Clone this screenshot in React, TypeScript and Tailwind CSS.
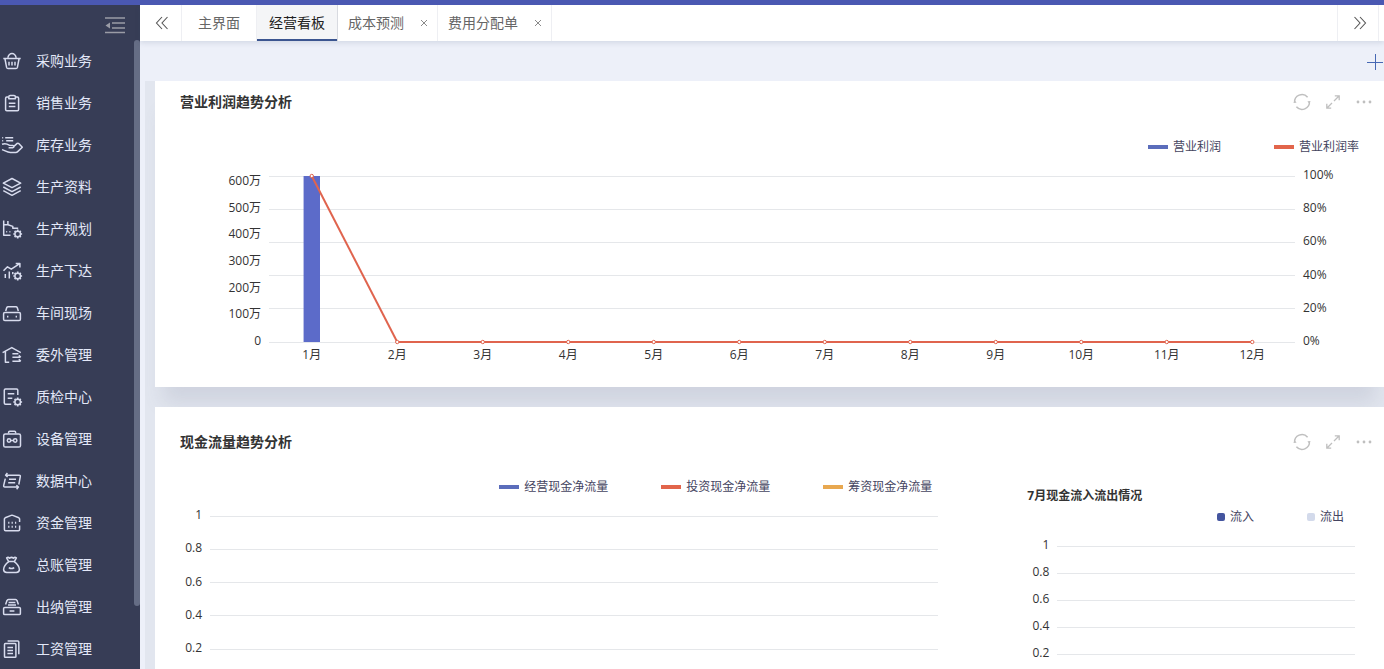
import React from 'react';

const FONT = "font-['Open_Sans','Noto_Sans_CJK_SC',sans-serif]";

const Gear = () => (
  <>
    <circle cx="15.7" cy="15" r="2.8" />
    <path
      d="M15.7 10.6v1.4M15.700 18v1.4M11.3 15h1.4M18.7 15h1.4M12.600 11.900l1 1M17.800 17.100l1 1M12.600 18.100l1-1M17.800 12.900l1-1"
      strokeWidth="1.7"
    />
  </>
);

interface MenuItem {
  label: string;
  icon: React.ReactNode;
}

const menuItems: MenuItem[] = [
  {
    label: '采购业务',
    icon: (
      <>
        <path d="M5.8 6.6C6.6 4 8.2 2.6 10 2.6s3.4 1.4 4.2 4M1.3 7.6h17.4M3 8l1.600 8.400q.3 1.200 1.400 1.200h8q1.100 0 1.400-1.200L17 8" />
        <path d="M7 10.8v3.6M10 10.8v3.6M13 10.8v3.6" />
      </>
    ),
  },
  {
    label: '销售业务',
    icon: (
      <>
        <path d="M6.6 4H4.8q-1.2 0-1.2 1.2v11.3q0 1.2 1.2 1.2h10.6q1.2 0 1.2-1.2V5.2q0-1.2-1.2-1.2h-1.8" />
        <path d="M6.8 3.8q0-1.4 1.4-1.4h3.8q1.4 0 1.4 1.4v2H6.8zM6.8 10.2h6.6M6.8 13.6h6.6" />
      </>
    ),
  },
  {
    label: '库存业务',
    icon: (
      <>
        <path d="M.2 2.7h1M3.2 2.7h8M.2 5.7h1M4.2 5.7h7" />
        <path d="M0 9.2c3-1.2 5-.6 7.2 1l3.6.2c1.6.2 1.6 2.2 0 2.3H6.6M11.6 11.6l3.6-3.2q1-.4 1.8.3l3.3 3.6-4.6 4.3q-.8.8-2 .8H8.4C5 17.4 3 15.4 0 14.6" />
      </>
    ),
  },
  {
    label: '生产资料',
    icon: (
      <>
        <path d="M10 1.5l8.7 4.6L10 10.6 1.3 6.1z" />
        <path d="M1.3 10l8.7 4.6 8.7-4.6M1.3 13.7l8.7 4.6 8.7-4.6" />
      </>
    ),
  },
  {
    label: '生产规划',
    icon: (
      <>
        <path d="M1.7 1.6v14.6h6.8M1.7 5.8h4.2V2M6 5.8l4.8 1.6v1.8h5.4" />
        <path d="M4.2 12.8h1M7.4 12.8h1" />
        <Gear />
      </>
    ),
  },
  {
    label: '生产下达',
    icon: (
      <>
        <path d="M1.5 9.800l4-4 3.8 2.4 8.4-5.6M13.7 2.4h4.2v4" />
        <path d="M3.3 13v4M7.3 10.5v7M10.8 11v2.2" />
        <Gear />
      </>
    ),
  },
  {
    label: '车间现场',
    icon: (
      <>
        <path d="M3.7 8l1-3.2q.4-1 1.4-1h7.8q1 0 1.4 1l1 3.2" />
        <rect x="1.6" y="9.4" width="16.8" height="8.2" rx="1.3" />
        <path d="M5 13.6h1.4M13.6 13.6H15" strokeWidth="1.9" />
      </>
    ),
  },
  {
    label: '委外管理',
    icon: (
      <>
        <path d="M.6 7.6L9.8 2.6l9 5M3.4 6.6v10.6h3.8" />
        <path d="M10.4 8.7h6M10.4 12.3h8M16.8 10.4l2 1.9M10.4 16.2h8.2M16.8 14.3l2 1.9" />
      </>
    ),
  },
  {
    label: '质检中心',
    icon: (
      <>
        <path d="M15.8 8V3.2q0-1.2-1.2-1.2H3.5q-1.2 0-1.2 1.2v12.9q0 1.2 1.2 1.2h5.7" />
        <path d="M5.7 6.7h6.6M5.7 11.3h4.6" />
        <Gear />
      </>
    ),
  },
  {
    label: '设备管理',
    icon: (
      <>
        <rect x="1.7" y="5" width="16.8" height="13" rx="1.6" />
        <path d="M6.6 4.6V3.2q0-1 1-1h5q1 0 1 1v1.4" />
        <circle cx="7" cy="11.5" r="1.7" />
        <circle cx="13.2" cy="11.5" r="1.7" />
        <path d="M8.8 11.5h2.6" />
      </>
    ),
  },
  {
    label: '数据中心',
    icon: (
      <>
        <path d="M5.4 2L3.6 4.2h13.5q1.5 0 1.2 1.5l-1.5 7.8M3.6 4.2l2 1.8" />
        <path d="M3.3 7.6L1.7 14.4q-.3 1.7 1.2 1.7h13.5l-1.8 2.1M16.4 16.1l-2-1.9M7 8.3h7M6.2 11.8h7" />
      </>
    ),
  },
  {
    label: '资金管理',
    icon: (
      <>
        <path d="M17.6 9V6q0-.8-.8-1.2L10.8 2.4q-.8-.3-1.6 0L3.2 4.8q-.8.4-.8 1.2v10.6q0 1.2 1.2 1.2h12.8q1.2 0 1.2-1.2v-4" />
        <path
          d="M6.2 9.8h1.2M9.6 9.8h1.2M13 9.8h1.2M6.2 13.8h1.2M9.6 13.8h1.2M13 13.8h1.2"
          strokeWidth="1.9"
        />
      </>
    ),
  },
  {
    label: '总账管理',
    icon: (
      <>
        <path d="M6.7 6.6L4.6 2.8q1.7-1 3 .4 1.9-1.6 3.8 0 1.3-1.4 3-.4l-2.1 3.800z" />
        <path d="M6.7 6.6C3.6 9 1.6 12 1.6 14.6q0 2.9 3.2 2.9h9.4q3.2 0 3.2-2.9c0-2.6-2-5.6-5.1-8M6.8 12.6q2.7 2 5.4 0" />
      </>
    ),
  },
  {
    label: '出纳管理',
    icon: (
      <>
        <path d="M3.6 7.6l1.400-4q.3-1 1.500-1h7q1.200 0 1.500 1l1.400 4M6.600 5.400h6.800M6 8h8" />
        <path d="M3.400 10.400H2.800q-1.200 0-1.200 1.200v4.800q0 1.200 1.200 1.200h14.400q1.200 0 1.200-1.200v-4.800q0-1.200-1.200-1.200zM7.600 14h4.800" />
      </>
    ),
  },
  {
    label: '工资管理',
    icon: (
      <>
        <rect x="2.5" y="4.6" width="11.4" height="13.6" rx=".8" />
        <path d="M5.6 1.9h10.2q1 0 1 1v12.3M5.4 8.4h5.6M5.4 11.4h5.6M5.4 14.4h5.6" />
      </>
    ),
  },
];

interface Tab {
  label: string;
  padding: string;
  active?: boolean;
  closable?: boolean;
}

const tabs: Tab[] = [
  { label: '主界面', padding: 'px-4' },
  { label: '经营看板', padding: 'px-3', active: true },
  { label: '成本预测', padding: 'pl-2.5 pr-[9px]', closable: true },
  { label: '费用分配单', padding: 'pl-2.5 pr-[9px]', closable: true },
];

const months = Array.from({ length: 12 }, (_, i) => `${i + 1}月`);
const profitRate = [100, 0, 0, 0, 0, 0, 0, 0, 0, 0, 0, 0];
const decimalTicks = ['1', '0.8', '0.6', '0.4', '0.2'];

const Sidebar = () => (
  <aside className="flex w-[140px] shrink-0 flex-col bg-[#373d56]">
    <div className="flex h-[35px] shrink-0 items-center justify-end pt-1 pr-3.5">
      <button aria-label="收起菜单" className="text-[#9a9ca6]">
        <svg className="h-5 w-[22px]" viewBox="0 0 22 20" fill="none" stroke="currentColor" strokeWidth="1.6">
          <path d="M1 3h20M8 8h13M8 13h13M1 17.5h20" />
          <path d="M1.5 10.5L6 7.5v6z" fill="currentColor" stroke="none" />
        </svg>
      </button>
    </div>
    <div className="flex min-h-0 flex-1">
      <nav className="flex-1">
        {menuItems.map((item) => (
          <a key={item.label} href="#" className="flex h-[42px] items-center gap-3.5 pl-0.5 text-sm text-[#e3e8f8]">
            <svg
              className="h-5 w-5 shrink-0 overflow-visible text-[#d8dcee]"
              viewBox="0 0 20 20"
              fill="none"
              stroke="currentColor"
              strokeWidth="1.5"
              strokeLinejoin="round"
            >
              {item.icon}
            </svg>
            {item.label}
          </a>
        ))}
      </nav>
      <div className="w-1.5">
        <div className="h-[90%] rounded-[3px] bg-[#656d85]" />
      </div>
    </div>
  </aside>
);

const TabBar = () => (
  <div className="z-10 flex h-9 shrink-0 bg-white text-sm text-[#666] shadow-[0_2px_5px_rgba(60,75,110,0.14)]">
    <button
      aria-label="向左滚动"
      className="flex w-[42px] items-center justify-center border-r border-[#eeeff3] pl-0.5 text-[#555]"
    >
      <svg className="h-3.5 w-3.5" viewBox="0 0 14 14" fill="none" stroke="currentColor" strokeWidth="1.1">
        <path d="M7 1L1.5 7 7 13M12.5 1L7 7l5.5 6" />
      </svg>
    </button>
    {tabs.map((tab) => (
      <div
        key={tab.label}
        className={`flex items-center border-r ${tab.padding} ${
          tab.active
            ? 'border-[#d8dae0] bg-[#f4f5f7] text-[#222] shadow-[inset_0_-2px_0_#3b5590]'
            : 'border-[#eeeff3]'
        }`}
      >
        <button>{tab.label}</button>
        {tab.closable && (
          <button aria-label={`关闭${tab.label}`} className="ml-4 w-2 text-[#8a8a8a]">
            <svg className="h-2 w-2" viewBox="0 0 8 8" fill="none" stroke="currentColor">
              <path d="M1 1l6 6M7 1L1 7" />
            </svg>
          </button>
        )}
      </div>
    ))}
    <div className="ml-auto flex pr-[5px]">
      <button
        aria-label="向右滚动"
        className="flex w-[42px] items-center justify-center border-x border-[#eeeff3] pl-1 text-[#555]"
      >
        <svg className="h-3.5 w-3.5" viewBox="0 0 14 14" fill="none" stroke="currentColor" strokeWidth="1.1">
          <path d="M1.5 1L7 7l-5.5 6M7 1l5.5 6L7 13" />
        </svg>
      </button>
    </div>
  </div>
);

const CardHeader = ({ title }: { title: string }) => (
  <div className="flex h-5 items-center justify-between pr-3 pl-[25px]">
    <h2 className="text-sm font-bold text-[#333]">{title}</h2>
    <div className="flex gap-[15px] text-[#bfbfbf]">
      <button aria-label="刷新">
        <svg
          className="h-4 w-4 overflow-visible"
          viewBox="0 0 16 16"
          fill="none"
          stroke="currentColor"
          strokeWidth="1.5"
        >
          <path d="M.6 8.6A7.4 7.4 0 0 1 13.6 3.2M15.4 7.4A7.4 7.4 0 0 1 2.4 12.8" />
          <path d="M13.4 7.2h3.2l-1.4 2.300zM-.6 8.8h3.2L.8 6.5z" fill="currentColor" stroke="none" />
        </svg>
      </button>
      <button aria-label="放大">
        <svg className="h-4 w-4" viewBox="0 0 16 16" fill="none" stroke="currentColor" strokeWidth="1.3">
          <path d="M9 7l5-5M9.8 1.8h4.4v4.400M7 9l-5 5M1.8 9.8v4.4h4.4" />
        </svg>
      </button>
      <button aria-label="更多">
        <svg className="h-4 w-4" viewBox="0 0 16 16" fill="currentColor">
          <circle cx="2" cy="8" r="1.4" />
          <circle cx="8" cy="8" r="1.4" />
          <circle cx="14" cy="8" r="1.4" />
        </svg>
      </button>
    </div>
  </div>
);

interface LegendItem {
  label: string;
  swatch: string;
}

const Legend = ({ items, className }: { items: LegendItem[]; className: string }) => (
  <div className={`flex h-4 justify-end gap-[53px] ${className}`}>
    {items.map((item) => (
      <span key={item.label} className="flex items-center gap-[5px] text-[#444460]">
        <i className={item.swatch} />
        {item.label}
      </span>
    ))}
  </div>
);

const AxisLabels = ({ ticks, className }: { ticks: string[]; className: string }) => (
  <div className={`flex shrink-0 flex-col justify-between ${className}`}>
    {ticks.map((tick) => (
      <span key={tick}>{tick}</span>
    ))}
  </div>
);

const GridLines = ({ count }: { count: number }) => (
  <g stroke="#e5e7ea" shapeRendering="crispEdges">
    {Array.from({ length: count }, (_, i) => (
      <line key={i} x1="0" x2="100%" y1={`${(i * 100) / (count - 1)}%`} y2={`${(i * 100) / (count - 1)}%`} />
    ))}
  </g>
);

const ProfitCard = () => {
  const pointX = (i: number) => `${((i + 0.5) * 100) / 12}%`;
  const pointY = (v: number) => `${100 - v}%`;

  return (
    <section className="bg-white pt-[11px] pb-6 shadow-[0_24px_18px_-8px_rgba(110,120,145,0.16)]">
      <CardHeader title="营业利润趋势分析" />
      <Legend
        className="mt-[27px] pr-[25px]"
        items={[
          { label: '营业利润', swatch: 'h-1 w-5 bg-[#5b6dbb]' },
          { label: '营业利润率', swatch: 'h-1 w-5 bg-[#e2654b]' },
        ]}
      />
      <div className="mt-3 flex items-start">
        <AxisLabels
          className="h-[182px] w-[114px] pt-1.5 pr-2 text-right"
          ticks={['600万', '500万', '400万', '300万', '200万', '100万', '0']}
        />
        <div className="flex-1 pt-[9px]">
          <svg className="block h-[166px] w-full overflow-visible">
            <GridLines count={6} />
            <rect x="3.37%" y="0" width="1.6%" height="100%" fill="#5c6bc9" />
            <g stroke="#e0644e" strokeWidth="2">
              {profitRate.slice(1).map((rate, i) => (
                <line key={i} x1={pointX(i)} y1={pointY(profitRate[i])} x2={pointX(i + 1)} y2={pointY(rate)} />
              ))}
            </g>
            <g stroke="#e0644e" fill="#fff">
              {profitRate.map((rate, i) => (
                <circle key={i} cx={pointX(i)} cy={pointY(rate)} r="1.7" />
              ))}
            </g>
          </svg>
          <div className="mt-[5px] flex">
            {months.map((month) => (
              <span key={month} className="flex-1 text-center">
                {month}
              </span>
            ))}
          </div>
        </div>
        <AxisLabels className="h-[182px] w-[89px] pl-2" ticks={['100%', '80%', '60%', '40%', '20%', '0%']} />
      </div>
    </section>
  );
};

const CashFlowCard = () => (
  <section className="flex-1 bg-white pt-[25px]">
    <CardHeader title="现金流量趋势分析" />
    <div className="grid grid-cols-3">
      <div className="col-span-2 pt-[27px]">
        <Legend
          className="pr-[42px]"
          items={[
            { label: '经营现金净流量', swatch: 'h-1 w-5 bg-[#5b6dbb]' },
            { label: '投资现金净流量', swatch: 'h-1 w-5 bg-[#e2654b]' },
            { label: '筹资现金净流量', swatch: 'h-1 w-5 bg-[#e8a850]' },
          ]}
        />
        <div className="mt-3 flex pr-9">
          <AxisLabels className="h-[149px] w-[55px] pr-2 text-right" ticks={decimalTicks} />
          <svg className="mt-[9px] block h-[133px] min-w-0 flex-1 overflow-visible">
            <GridLines count={5} />
          </svg>
        </div>
      </div>
      <div className="pt-9">
        <h3 className="pl-[53px] text-xs font-bold">7月现金流入流出情况</h3>
        <Legend
          className="mt-[5px] pr-10"
          items={[
            { label: '流入', swatch: 'h-2 w-2 rounded-[2px] bg-[#44559f]' },
            { label: '流出', swatch: 'h-2 w-2 rounded-[2px] bg-[#d3daeb]' },
          ]}
        />
        <div className="mt-3 flex pr-[29px]">
          <AxisLabels className="h-[124px] w-[83px] pr-2 text-right" ticks={decimalTicks} />
          <svg className="mt-[9px] block h-[108px] min-w-0 flex-1 overflow-visible">
            <GridLines count={5} />
          </svg>
        </div>
      </div>
    </div>
  </section>
);

export default function App() {
  return (
    <div className={`flex h-screen flex-col overflow-hidden border-t-[5px] border-[#4a58b2] bg-[#edf0f9] ${FONT}`}>
      <div className="flex min-h-0 flex-1">
        <Sidebar />
        <div className="flex min-w-0 flex-1 flex-col">
          <TabBar />
          <div className="flex h-10 shrink-0 items-center justify-end pt-0.5 pr-px">
            <button aria-label="添加" className="text-[#4668b4]">
              <svg className="h-4 w-4" viewBox="0 0 16 16" fill="none" stroke="currentColor">
                <path d="M8.5 0v16M0 8.5h16" />
              </svg>
            </button>
          </div>
          <main className="ml-[5px] flex min-h-0 flex-1 flex-col gap-5 overflow-hidden bg-[#e2e6ef] pl-2.5 text-xs text-[#333]">
            <ProfitCard />
            <CashFlowCard />
          </main>
        </div>
      </div>
    </div>
  );
}
